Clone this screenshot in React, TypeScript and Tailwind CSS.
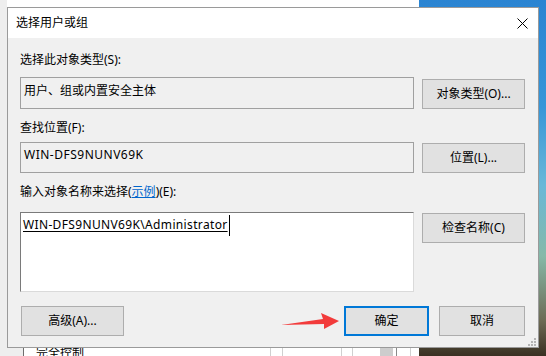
import React from 'react';

function WinButton({
  children,
  className = '',
  primary = false,
}: {
  children: React.ReactNode;
  className?: string;
  primary?: boolean;
}) {
  return (
    <button
      className={
        'flex h-[30px] items-center justify-center bg-[#e1e1e1] leading-4 ' +
        (primary ? 'border-2 border-[#0078d7] ' : 'border border-[#adadad] ') +
        className
      }
    >
      {children}
    </button>
  );
}

function Backdrop() {
  return (
    <>
      {/* wallpaper on the right */}
      <div className="absolute left-[419px] top-0 h-full w-[127px] bg-[linear-gradient(to_bottom,#2a84d2_0%,#3796d8_30%,#6ab8d8_52%,#86b9a8_72%,#6d6b55_90%,#3a3022_100%)]" />
      {/* window behind, left side */}
      <div className="absolute left-0 top-0 h-full w-[7px] bg-[#eeeeee]" />
      <div className="absolute left-0 top-[346px] h-[10px] w-[23px] bg-[#eeeeee]" />
      <div className="absolute left-[23px] top-[346px] h-[10px] w-px bg-[#6e6e6e]" />
      <div className="absolute left-[36px] top-[345px] leading-4">完全控制</div>
      <div className="absolute left-[270px] top-[346px] h-[10px] w-px bg-[#d0d0d0]" />
      <div className="absolute left-[282px] top-[346px] h-[10px] w-px bg-[#d0d0d0]" />
      <div className="absolute left-[341px] top-[346px] h-[10px] w-px bg-[#d0d0d0]" />
      <div className="absolute left-[352px] top-[346px] h-[10px] w-px bg-[#d0d0d0]" />
      <div className="absolute left-[380px] top-[346px] h-[10px] w-[13px] bg-[#cdcdcd]" />
      <div className="absolute left-[396px] top-[346px] h-[10px] w-px bg-[#8a8a8a]" />
      <div className="absolute left-[410px] top-[346px] h-[10px] w-px bg-[#d0d0d0]" />
    </>
  );
}

export default function App() {
  return (
    <div className="relative h-[356px] w-[546px] overflow-hidden bg-white font-['Noto_Sans','Noto_Sans_CJK_SC',sans-serif] text-[12px] text-black">
      <Backdrop />

      <div className="absolute left-[7px] top-[7px] flex h-[341px] w-[532px] flex-col border border-[#9a9a9a] bg-[#f0f0f0]">
        {/* title bar */}
        <div className="flex h-[30px] items-center justify-between bg-white pl-[8px] pr-[10px]">
          <span className="leading-4">选择用户或组</span>
          <svg width="11" height="11" viewBox="0 0 11 11">
            <path d="M0.5 0.5 L10.5 10.5 M10.5 0.5 L0.5 10.5" stroke="#000" strokeWidth="1" />
          </svg>
        </div>

        <div className="flex flex-col pl-[12px] pr-[13px]">
          <div className="mt-[14px] leading-4">选择此对象类型(S):</div>
          <div className="mt-[9px] flex items-start gap-2">
            <div className="h-8 w-[394px] border border-[#a0a0a0] pl-[3px] pt-[5px] leading-4">
              用户、组或内置安全主体
            </div>
            <WinButton className="mt-[2px] w-[103px]">对象类型(O)...</WinButton>
          </div>

          <div className="mt-[11px] leading-4">查找位置(F):</div>
          <div className="mt-[6px] flex items-start gap-2">
            <div className="h-[31px] w-[394px] border border-[#a0a0a0] pl-[3px] pt-[4px] leading-4 tracking-[0.5px]">
              WIN-DFS9NUNV69K
            </div>
            <WinButton className="mt-px w-[103px]">位置(L)...</WinButton>
          </div>

          <div className="mt-[11px] leading-4">
            输入对象名称来选择(<span className="text-[#0066cc] underline">示例</span>)(E):
          </div>
          <div className="mt-[12px] flex items-start gap-2">
            <div className="h-[80px] w-[394px] border border-b-[#dadada] border-l-[#7a7a7a] border-r-[#dadada] border-t-[#7a7a7a] bg-white pl-[2px] pt-[3px]">
              <span className="relative leading-4 tracking-[0.35px] underline underline-offset-2">
                WIN-DFS9NUNV69K\Administrator
                <span className="absolute -right-[2px] -top-[1px] h-[21px] w-px bg-black" />
              </span>
            </div>
            <WinButton className="mt-px w-[103px]">检查名称(C)</WinButton>
          </div>

          <div className="mt-[14px] flex items-start">
            <WinButton className="ml-px w-[103px]">高级(A)...</WinButton>
            <div className="flex-1" />
            <WinButton primary className="w-[85px]">确定</WinButton>
            <WinButton className="ml-[10px] w-[86px]">取消</WinButton>
          </div>
        </div>

        {/* size grip */}
        <svg className="absolute bottom-[1px] right-[2px]" width="9" height="9" viewBox="0 0 9 9">
          <rect x="7" y="1" width="2" height="2" fill="#b4b4b4" />
          <rect x="4" y="4" width="2" height="2" fill="#b4b4b4" />
          <rect x="7" y="4" width="2" height="2" fill="#b4b4b4" />
          <rect x="1" y="7" width="2" height="2" fill="#b4b4b4" />
          <rect x="4" y="7" width="2" height="2" fill="#b4b4b4" />
          <rect x="7" y="7" width="2" height="2" fill="#b4b4b4" />
        </svg>
      </div>

      {/* red annotation arrow */}
      <svg className="absolute left-[278px] top-[310px]" width="64" height="22" viewBox="0 0 64 22">
        <polygon points="3,15 45,9 43,3 61,11 46,19 46,14" fill="#f23b3b" />
      </svg>
    </div>
  );
}
